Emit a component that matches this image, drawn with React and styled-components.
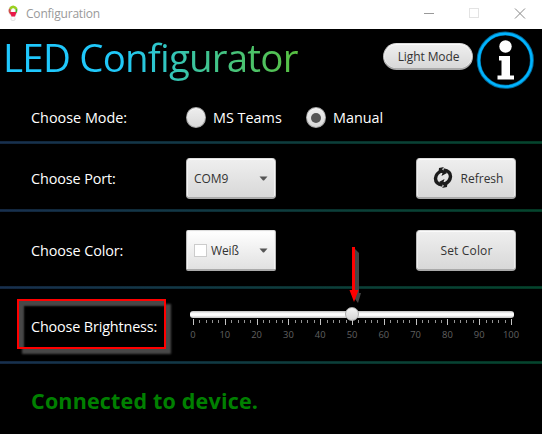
import React from "react";
import styled, { createGlobalStyle } from "styled-components";

const GlobalStyle = createGlobalStyle`
  * { box-sizing: border-box; }
  body { margin: 0; background: #000; font-family: "Open Sans", "Noto Sans", sans-serif; overflow: hidden; }
  button { font: inherit; margin: 0; }
`;

const Window = styled.div`
  width: 542px;
  height: 434px;
  display: flex;
  flex-direction: column;
  background: #000;
  color: #fff;
  overflow: hidden;
  white-space: nowrap;
`;

const TitleBar = styled.header`
  height: 29px;
  flex: none;
  display: flex;
  align-items: flex-start;
  background: #fff;
  color: #999;
  padding: 4px 16px 0 7px;
`;

const WindowTitle = styled.span`
  font-size: 12px;
  line-height: 20px;
  letter-spacing: -0.2px;
  margin-left: 7px;
  flex: 1;
`;

const Header = styled.div`
  height: 66px;
  flex: none;
  display: flex;
  align-items: flex-start;
  padding-left: 3px;
`;

const Title = styled.h1`
  margin: 0;
  width: 380px;
  font-size: 38.5px;
  font-weight: 400;
  line-height: 56px;
  letter-spacing: ${(p) => p.$spacing}px;

  span {
    display: inline-block;
    background: linear-gradient(90deg, #1fc8ff 0%, #20c8f8 40%, #3cc49c 65%, #58c040 100%);
    background-clip: text;
    -webkit-background-clip: text;
    color: transparent;
  }
`;

const Button = styled.button`
  display: flex;
  align-items: center;
  justify-content: center;
  width: ${(p) => (p.$pill ? 90 : 100)}px;
  height: ${(p) => (p.$pill ? 27 : 41)}px;
  margin-top: ${(p) => (p.$pill ? 14 : 0)}px;
  padding: ${(p) => (p.$pill ? "1px 0 0 1px" : "0 0 0 1px")};
  gap: 8px;
  border: 1px solid #bbb;
  border-top-color: #ddd;
  border-bottom: 2px solid #a9a9a9;
  border-radius: ${(p) => (p.$pill ? 14 : 4)}px;
  background: linear-gradient(#efefef, #d8d8d8);
  box-shadow: inset 0 1px #fbfbfb, inset 1px 0 #eee, inset -1px 0 #eee;
  color: #333;
  font-size: 12px;
  letter-spacing: ${(p) => p.$spacing || 0}px;
  svg { margin-left: 3px; }
`;

const InfoIcon = styled.svg`
  margin: 2px 0 0 2px;
`;

const Row = styled.section`
  height: ${(p) => p.$height}px;
  flex: none;
  display: grid;
  grid-template-columns: 155px 230px 100px;
  align-items: center;
  padding: ${(p) => p.$top || 0}px 0 0 31px;
`;

const Label = styled.span`
  font-size: 14.4px;
  line-height: 20px;
  letter-spacing: ${(p) => p.$spacing || 0}px;
`;

const Divider = styled.hr`
  height: 3px;
  flex: none;
  margin: 0;
  border: 0;
  background: linear-gradient(90deg, #18304f, #123846 33%, #0b4038 66%, #04452d);
  box-shadow: inset 0 1px #0003, inset 0 -1px #0003;
`;

const RadioGroup = styled.div`
  display: flex;
  align-items: center;
  margin-top: -1px;
`;

const RadioOption = styled.label`
  display: flex;
  align-items: center;
  gap: 7px;
  width: 120px;
  flex: none;
`;

const RadioDisc = styled.span`
  width: 20px;
  height: 21px;
  border-radius: 50%;
  border: 1px solid #aaa;
  background: linear-gradient(#eee, #d9d9d9);
  box-shadow: inset 0 1px #f8f8f8;
  display: grid;
  place-items: center;
  &::after {
    content: "";
    width: 10px;
    height: 10px;
    border-radius: 50%;
    background: ${(p) => (p.$checked ? "#555" : "transparent")};
  }
`;

const Select = styled.div`
  width: 90px;
  height: 41px;
  display: flex;
  align-items: center;
  gap: 4px;
  padding: 0 7px;
  border: 1px solid #bbb;
  border-top-color: #ddd;
  border-bottom: 2px solid #aaa;
  border-radius: ${(p) => (p.$light ? 2 : 4)}px;
  background: ${(p) => (p.$light ? "linear-gradient(#fff, #e1e1e1)" : "linear-gradient(#efefef, #d8d8d8)")};
  box-shadow: inset 0 1px #fbfbfb, inset 1px 0 #f4f4f4, inset -1px 0 #f4f4f4;
  color: #333;
  font-size: 12px;
  letter-spacing: ${(p) => p.$spacing || 0}px;
  svg { margin-left: auto; }
`;

const Swatch = styled.span`
  width: 13px;
  height: 13px;
  background: #fff;
  border: 1px solid #ccc;
`;

const Highlight = styled.div`
  width: 149px;
  height: 50px;
  margin-left: -14px;
  margin-top: -2px;
  border: 2px solid #f00;
  display: flex;
  align-items: center;
  padding: 5px 0 0 12px;
  box-shadow: 5px 5px 2px #484848, inset 5px 5px 2px #484848;
`;

const Slider = styled.div`
  width: 324px;
  margin-left: 4px;
  height: 31px;
  margin-top: 2px;
`;

const Track = styled.div`
  width: 324px;
  height: 7px;
  border-radius: 3px;
  background: linear-gradient(#bbb, #f7f7f7 30%, #fff 60%, #c0c0c0);
  display: flex;
  align-items: center;
  justify-content: center;
`;

const Thumb = styled.span`
  width: 14px;
  height: 14px;
  flex: none;
  border-radius: 50%;
  border: 1px solid #aaa;
  background: linear-gradient(#f3f3f3, #d5d5d5);
`;

const Ticks = styled.div`
  display: flex;
  justify-content: space-between;
  margin: 1px 2px 0 3px;
  height: 6px;
`;

const Tick = styled.i`
  width: 1px;
  height: ${(p) => (p.$major ? 6 : 3)}px;
  margin-top: ${(p) => (p.$major ? 0 : 1)}px;
  background: ${(p) => (p.$major ? "#c5c5c5" : "#959595")};
`;

const Scale = styled.div`
  display: flex;
  justify-content: space-between;
  margin: 3px 3px 0 3px;
  font-size: 9.4px;
  line-height: 13px;
  color: #606060;
  span { width: 0; display: flex; justify-content: center; }
`;

const Status = styled.p`
  margin: 0;
  padding: 21px 0 0 31px;
  font-size: 21.5px;
  font-weight: 700;
  line-height: 32px;
  letter-spacing: ${(p) => p.$spacing}px;
  color: #008000;
`;

const Arrow = styled.svg`
  position: absolute;
  left: 345px;
  top: 244px;
  pointer-events: none;
`;

const Bulb = () => (
  <svg width="12" height="18" viewBox="0 0 12 18">
    <path d="M2 10C0 5 2 1.500 6 1.500S12 5 10 10l-2 3H4z" fill="#eee" />
    <path d="M3 5Q6 .5 9.500 5" fill="none" stroke="#9bd21c" strokeWidth="2.500" />
    <path d="M3 5Q1.700 8 4.500 10" fill="none" stroke="#d0504a" strokeWidth="2" />
    <path d="M9.500 5Q10 8 7.500 10" fill="none" stroke="#47b52c" strokeWidth="1.600" />
    <path d="M3 8h6.500L8 12.500H4.500z" fill="#e91948" />
    <circle cx="6.200" cy="6.500" r="1.600" fill="#fff" />
    <path d="M4 13.500v2.500q2 1.400 4 0v-2.500" fill="#fafafa" stroke="#ddd" strokeWidth=".8" />
  </svg>
);

const WindowControls = () => (
  <svg width="104" height="20" viewBox="0 0 104 20" fill="none">
    <path d="M2 9.500h10" stroke="#999" />
    <rect x="47.500" y="4.500" width="9" height="9" stroke="#e3e3e3" />
    <path d="M93 4.500l10 10M103 4.500l-10 10" stroke="#888" />
  </svg>
);

const Caret = () => (
  <svg width="9" height="5" viewBox="0 0 9 5">
    <path d="M.5.5h8L5 4.500H4z" fill="#555" />
  </svg>
);

const RefreshIcon = () => (
  <svg width="20" height="22" viewBox="0 0 20 22">
    <g id="half">
      <path d="M9.500 18Q2.500 17 2.500 11.500Q3 6 8.500 4" fill="none" stroke="#1c1c1c" strokeWidth="3.400" />
      <path d="M6 1l5-1-2 2.200 5 3.800-5.500 3 1-3-4-.5z" fill="#1c1c1c" />
    </g>
    <use href="#half" transform="rotate(180 10 10.500)" />
  </svg>
);

const Info = () => (
  <InfoIcon width="60" height="58" viewBox="0 0 60 58">
    <circle cx="30.300" cy="29.200" r="26.600" fill="none" stroke="#006c9c" strokeWidth="4" />
    <circle cx="30.300" cy="29.200" r="26.400" fill="none" stroke="#00b4ff" strokeWidth="2.400" />
    <circle cx="30.500" cy="15.500" r="6.200" fill="#fff" />
    <path d="M24 25h11v19.500h4v4H22.500v-4h4V29.500H24z" fill="#fff" />
  </InfoIcon>
);

export default function App() {
  return (
    <Window>
      <GlobalStyle />
      <TitleBar>
        <Bulb />
        <WindowTitle>Configuration</WindowTitle>
        <WindowControls />
      </TitleBar>
      <Header>
        <Title $spacing={-0.8}><span>LED Configurator</span></Title>
        <Button $pill $spacing={-0.1}>Light Mode</Button>
        <Info />
      </Header>
      <Row $height={46}>
        <Label>Choose Mode:</Label>
        <RadioGroup>
          <RadioOption><RadioDisc /><Label>MS Teams</Label></RadioOption>
          <RadioOption><RadioDisc $checked /><Label>Manual</Label></RadioOption>
        </RadioGroup>
      </Row>
      <Divider />
      <Row $height={65} $top={4}>
        <Label $spacing={-0.1}>Choose Port:</Label>
        <Select $spacing={-0.1}>COM9<Caret /></Select>
        <Button><RefreshIcon />Refresh</Button>
      </Row>
      <Divider />
      <Row $height={74} $top={3}>
        <Label $spacing={-0.1}>Choose Color:</Label>
        <Select $light $spacing={-0.15}><Swatch />Weiß<Caret /></Select>
        <Button $spacing={0.15}>Set Color</Button>
      </Row>
      <Divider />
      <Row $height={72}>
        <Highlight><Label $spacing={-0.15}>Choose Brightness:</Label></Highlight>
        <Slider>
          <Track><Thumb /></Track>
          <Ticks>
            {Array.from({ length: 51 }, (_, i) => <Tick key={i} $major={i % 5 === 0} />)}
          </Ticks>
          <Scale>
            {Array.from({ length: 11 }, (_, i) => <span key={i}>{i * 10}</span>)}
          </Scale>
        </Slider>
      </Row>
      <Divider />
      <Status $spacing={0.18}>Connected to device.</Status>
      <Arrow width="22" height="64" viewBox="0 0 22 64">
        <path d="M10 5l4 4v40h2l-3 10-6-8" fill="#454545" />
        <path d="M7 3h3v43h3.500L9 58 4.500 46H7z" fill="#f00" />
      </Arrow>
    </Window>
  );
}
